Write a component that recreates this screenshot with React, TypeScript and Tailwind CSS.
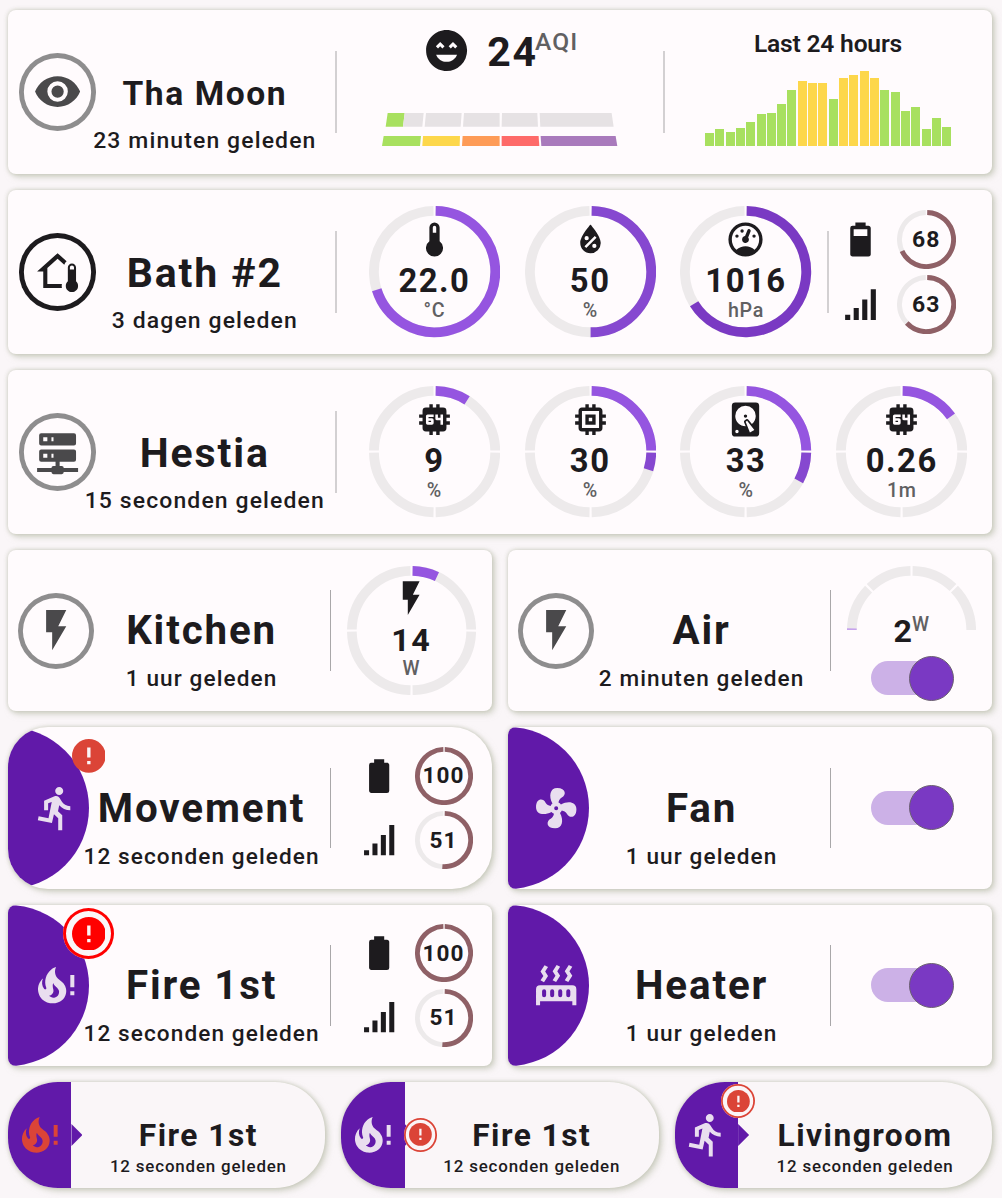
import type { ReactNode } from "react";

const icons = {
  eye: "M12,9A3,3 0 0,0 9,12A3,3 0 0,0 12,15A3,3 0 0,0 15,12A3,3 0 0,0 12,9M12,17A5,5 0 0,1 7,12A5,5 0 0,1 12,7A5,5 0 0,1 17,12A5,5 0 0,1 12,17M12,4.5C7,4.5 2.73,7.61 1,12C2.73,16.39 7,19.5 12,19.5C17,19.5 21.27,16.39 23,12C21.27,7.61 17,4.5 12,4.5Z",
  homeThermometer:
    "M19 8C20.11 8 21 8.9 21 10V16.76C21.61 17.31 22 18.11 22 19C22 20.66 20.66 22 19 22C17.34 22 16 20.66 16 19C16 18.11 16.39 17.31 17 16.76V10C17 8.9 17.9 8 19 8M19 9C18.45 9 18 9.45 18 10V11H20V10C20 9.45 19.55 9 19 9M12 5.69L7 10.19V18H14.1L14 19L14.1 20H5V12H2L12 3L16.4 6.96C15.89 7.4 15.5 7.97 15.25 8.61L12 5.69Z",
  server:
    "M13,19H14A1,1 0 0,1 15,20H22V22H15A1,1 0 0,1 14,23H10A1,1 0 0,1 9,22H2V20H9A1,1 0 0,1 10,19H11V17H4A1,1 0 0,1 3,16V12A1,1 0 0,1 4,11H20A1,1 0 0,1 21,12V16A1,1 0 0,1 20,17H13V19M4,3H20A1,1 0 0,1 21,4V8A1,1 0 0,1 20,9H4A1,1 0 0,1 3,8V4A1,1 0 0,1 4,3M9,7H10V5H9V7M9,15H10V13H9V15M5,5V7H7V5H5M5,13V15H7V13H5Z",
  flash: "M7,2V13H10V22L17,10H13L17,2H7Z",
  thermometer: "M15 13V5A3 3 0 0 0 9 5V13A5 5 0 1 0 15 13M12 4A1 1 0 0 1 13 5V8H11V5A1 1 0 0 1 12 4Z",
  humidity:
    "M12,3.25C12,3.25 6,10 6,14C6,17.32 8.69,20 12,20A6,6 0 0,0 18,14C18,10 12,3.25 12,3.25M14.47,9.97L15.53,11.03L9.53,17.03L8.47,15.97M9.75,10A1.25,1.25 0 0,1 11,11.25A1.25,1.25 0 0,1 9.75,12.5A1.25,1.25 0 0,1 8.5,11.25A1.25,1.25 0 0,1 9.75,10M14.25,14.5A1.25,1.25 0 0,1 15.5,15.75A1.25,1.25 0 0,1 14.25,17A1.25,1.25 0 0,1 13,15.75A1.25,1.25 0 0,1 14.25,14.5Z",
  gauge:
    "M12,2A10,10 0 0,0 2,12A10,10 0 0,0 12,22A10,10 0 0,0 22,12A10,10 0 0,0 12,2M12,4A8,8 0 0,1 20,12C20,14.4 19,16.5 17.3,18C15.9,16.7 14,16 12,16C10,16 8.2,16.7 6.7,18C5,16.5 4,14.4 4,12A8,8 0 0,1 12,4M14,5.89C13.62,5.9 13.26,6.15 13.1,6.54L11.81,9.77L11.71,10C11,10.13 10.41,10.6 10.14,11.26C9.73,12.29 10.23,13.45 11.26,13.86C12.29,14.27 13.45,13.77 13.86,12.74C14.12,12.08 14,11.32 13.57,10.76L13.67,10.5L14.96,7.29L14.97,7.26C15.17,6.75 14.92,6.17 14.41,5.96C14.28,5.91 14.15,5.89 14,5.89M10,6A1,1 0 0,0 9,7A1,1 0 0,0 10,8A1,1 0 0,0 11,7A1,1 0 0,0 10,6M7,9A1,1 0 0,0 6,10A1,1 0 0,0 7,11A1,1 0 0,0 8,10A1,1 0 0,0 7,9M17,9A1,1 0 0,0 16,10A1,1 0 0,0 17,11A1,1 0 0,0 18,10A1,1 0 0,0 17,9Z",
  cpu64:
    "M9,3V5H7A2,2 0 0,0 5,7V9H3V11H5V13H3V15H5V17A2,2 0 0,0 7,19H9V21H11V19H13V21H15V19H17A2,2 0 0,0 19,17V15H21V13H19V11H21V9H19V7A2,2 0 0,0 17,5H15V3H13V5H11V3M8,9H11.5V10.5H8.5V11.25H10.5A1,1 0 0,1 11.5,12.25V14A1,1 0 0,1 10.5,15H8A1,1 0 0,1 7,14V10A1,1 0 0,1 8,9M12.5,9H14V11H15.5V9H17V15H15.5V12.5H13.5A1,1 0 0,1 12.5,11.5V9M8.5,12.75V13.5H10V12.75H8.5Z",
  memory:
    "M17,17H7V7H17M21,11V9H19V7C19,5.89 18.1,5 17,5H15V3H13V5H11V3H9V5H7C5.89,5 5,5.89 5,7V9H3V11H5V13H3V15H5V17A2,2 0 0,0 7,19H9V21H11V19H13V21H15V19H17A2,2 0 0,0 19,17V15H21V13H19V11M13,13H11V11H13M15,9H9V15H15V9Z",
  disk: "M6,2H18A2,2 0 0,1 20,4V20A2,2 0 0,1 18,22H6A2,2 0 0,1 4,20V4A2,2 0 0,1 6,2M12,4A6,6 0 0,0 6,10C6,13.31 8.69,16 12.1,16L11.22,13.77C10.95,13.29 11.11,12.68 11.59,12.4L12.45,11.9C12.93,11.63 13.54,11.79 13.82,12.27L15.74,14.69C17.12,13.59 18,11.9 18,10A6,6 0 0,0 12,4M12,9A1,1 0 0,1 13,10A1,1 0 0,1 12,11A1,1 0 0,1 11,10A1,1 0 0,1 12,9M7,18A1,1 0 0,0 6,19A1,1 0 0,0 7,20A1,1 0 0,0 8,19A1,1 0 0,0 7,18M12.09,13.27L14.58,19.58L17.17,18.08L12.95,12.77L12.09,13.27Z",
  battery:
    "M16.67,4H15V2H9V4H7.33A1.33,1.33 0 0,0 6,5.33V20.67C6,21.4 6.6,22 7.33,22H16.67A1.33,1.33 0 0,0 18,20.67V5.33C18,4.6 17.4,4 16.67,4Z",
  battery70:
    "M16,10H8V6H16M16.67,4H15V2H9V4H7.33A1.33,1.33 0 0,0 6,5.33V20.67C6,21.4 6.6,22 7.33,22H16.67A1.33,1.33 0 0,0 18,20.67V5.33C18,4.6 17.4,4 16.67,4Z",
  signal: "M3,21H6V18H3M8,21H11V14H8M13,21H16V9H13M18,21H21V3H18V21Z",
  excited:
    "M12,2C6.47,2 2,6.47 2,12C2,17.53 6.47,22 12,22A10,10 0 0,0 22,12C22,6.47 17.5,2 12,2M8.88,7.82L11,9.94L9.94,11L8.88,9.94L7.82,11L6.76,9.94L8.88,7.82M12,17.5C9.67,17.5 7.69,16.04 6.89,14H17.11C16.31,16.04 14.33,17.5 12,17.5M16.18,11L15.12,9.94L14.06,11L13,9.94L15.12,7.82L17.24,9.94L16.18,11Z",
  run: "M13.5,5.5C14.59,5.5 15.5,4.58 15.5,3.5C15.5,2.38 14.59,1.5 13.5,1.5C12.39,1.5 11.5,2.38 11.5,3.5C11.5,4.58 12.39,5.5 13.5,5.5M9.89,19.38L10.89,15L13,17V23H15V15.5L12.89,13.5L13.5,10.5C14.79,12 16.79,13 19,13V11C17.09,11 15.5,10 14.69,8.58L13.69,7C13.29,6.38 12.69,6 12,6C11.69,6 11.5,6.08 11.19,6.08L6,8.28V13H8V9.58L9.79,8.88L8.19,17L3.29,16L2.89,18L9.89,19.38Z",
  fan: "M12,11A1,1 0 0,0 11,12A1,1 0 0,0 12,13A1,1 0 0,0 13,12A1,1 0 0,0 12,11M12.5,2C17,2 17.11,5.57 14.75,6.75C13.76,7.24 13.32,8.29 13.13,9.22C13.61,9.42 14.03,9.73 14.35,10.13C18.05,8.13 22.03,8.92 22.03,12.5C22.03,17 18.46,17.1 17.28,14.73C16.78,13.74 15.72,13.3 14.79,13.11C14.59,13.59 14.28,14 13.88,14.34C15.87,18.03 15.08,22 11.5,22C7,22 6.91,18.42 9.27,17.24C10.25,16.75 10.69,15.71 10.89,14.79C10.4,14.59 9.97,14.27 9.65,13.87C5.96,15.85 2,15.07 2,11.5C2,7 5.56,6.89 6.74,9.26C7.24,10.25 8.29,10.68 9.22,10.87C9.41,10.39 9.73,9.97 10.14,9.65C8.15,5.96 8.94,2 12.5,2Z",
  radiator:
    "M7.95,3L6.53,5.19L7.95,7.4H7.94L5.95,10.5L4.22,9.6L5.64,7.39L4.22,5.19L6.22,2.09L7.95,3M13.95,2.89L12.53,5.1L13.95,7.3L13.94,7.31L11.95,10.4L10.22,9.5L11.64,7.3L10.22,5.1L12.22,2L13.95,2.89M20,2.89L18.56,5.1L20,7.3V7.31L18,10.4L16.25,9.5L17.67,7.3L16.25,5.1L18.25,2L20,2.89M2,22V14A2,2 0 0,1 4,12H20A2,2 0 0,1 22,14V22H20V20H4V22H2M6,14A1,1 0 0,0 5,15V17A1,1 0 0,0 6,18A1,1 0 0,0 7,17V15A1,1 0 0,0 6,14M10,14A1,1 0 0,0 9,15V17A1,1 0 0,0 10,18A1,1 0 0,0 11,17V15A1,1 0 0,0 10,14M14,14A1,1 0 0,0 13,15V17A1,1 0 0,0 14,18A1,1 0 0,0 15,17V15A1,1 0 0,0 14,14M18,14A1,1 0 0,0 17,15V17A1,1 0 0,0 18,18A1,1 0 0,0 19,17V15A1,1 0 0,0 18,14Z",
  fireAlert:
    "M15.66 11.2C15.43 10.9 15.15 10.64 14.89 10.38C14.22 9.78 13.46 9.35 12.82 8.72C11.33 7.26 11 4.85 11.95 3C11 3.23 10.17 3.75 9.46 4.32C6.87 6.4 5.85 10.07 7.07 13.22C7.11 13.32 7.15 13.42 7.15 13.55C7.15 13.77 7 13.97 6.8 14.05C6.57 14.15 6.33 14.09 6.14 13.93C6.08 13.88 6.04 13.83 6 13.76C4.87 12.33 4.69 10.28 5.45 8.64C3.78 10 2.87 12.3 3 14.47C3.06 14.97 3.12 15.47 3.29 15.97C3.43 16.57 3.7 17.17 4 17.7C5.08 19.43 6.95 20.67 8.96 20.92C11.1 21.19 13.39 20.8 15.03 19.32C16.86 17.66 17.5 15 16.56 12.72L16.43 12.46C16.22 12 15.66 11.2 15.66 11.2M12.5 17.5C12.22 17.74 11.76 18 11.4 18.1C10.28 18.5 9.16 17.94 8.5 17.28C9.69 17 10.4 16.12 10.61 15.23C10.78 14.43 10.46 13.77 10.33 13C10.21 12.26 10.23 11.63 10.5 10.94C10.69 11.32 10.89 11.7 11.13 12C11.9 13 13.11 13.44 13.37 14.8C13.41 14.94 13.43 15.08 13.43 15.23C13.46 16.05 13.1 16.95 12.5 17.5H12.5M19 7H21V13H19V7M19 15H21V17H19V15Z",
};

type IconName = keyof typeof icons;

function Icon({ name, className }: { name: IconName; className: string }) {
  return (
    <svg viewBox="0 0 24 24" fill="currentColor" className={`shrink-0 ${className}`}>
      <path d={icons[name]} />
    </svg>
  );
}

function arc(c: number, r: number, from: number, to: number) {
  const p = (deg: number) => {
    const a = ((deg - 90) * Math.PI) / 180;
    return `${(c + r * Math.cos(a)).toFixed(3)} ${(c + r * Math.sin(a)).toFixed(3)}`;
  };
  return `M${p(from)}A${r} ${r} 0 ${to - from > 180 ? 1 : 0} 1 ${p(to)}`;
}

/* Every card sets --u, one hundredth of its height; children are sized in it. */
const SHADOW = "shadow-[0_0_4px_rgba(186,190,172,0.8),3px_3px_6px_rgba(186,190,172,0.6)]";

function WideCard({ children }: { children: ReactNode }) {
  return (
    <section
      className={`flex h-[164px] w-[984px] overflow-hidden rounded-lg bg-[#fffbfd] [--gap:16px] [--top:63px] [--u:1.64px] ${SHADOW}`}
    >
      {children}
    </section>
  );
}

function HalfCard({ round, children }: { round?: boolean; children: ReactNode }) {
  return (
    <section
      className={`relative flex h-[161.33px] w-[484px] overflow-hidden bg-[#fffbfd] [--gap:16.8px] [--top:61.3px] [--u:1.6133px] ${
        round ? "rounded-[40px]" : "rounded-lg"
      } ${SHADOW}`}
    >
      {children}
    </section>
  );
}

function CircleIcon({ name, strong }: { name: IconName; strong?: boolean }) {
  return (
    <div className="flex w-[calc(60*var(--u))] shrink-0 items-center justify-center">
      <div
        className={`flex size-[calc(47*var(--u))] shrink-0 items-center justify-center rounded-full ${
          strong
            ? "text-[#1d1b1e] shadow-[inset_0_0_0_4.9px_#1d1b1e]"
            : "text-[#4a494b] shadow-[inset_0_0_0_4.9px_#8e8d8e]"
        }`}
      >
        <Icon name={name} className="size-[calc(30*var(--u))]" />
      </div>
    </div>
  );
}

function PurpleIcon({ name, badge }: { name: IconName; badge?: ReactNode }) {
  return (
    <div className="flex w-[calc(60*var(--u))] shrink-0 items-center justify-center">
      <div className="absolute top-0 left-0 h-full w-[calc(50*var(--u))] rounded-r-full bg-[#6119a9]" />
      {badge}
      <Icon name={name} className="relative size-[calc(30*var(--u))] text-[#e9deef]" />
    </div>
  );
}

function Title({ name, ago, small }: { name: string; ago: string; small?: boolean }) {
  return (
    <div className="relative flex w-[calc(120*var(--u))] shrink-0 flex-col items-center pt-[var(--top)] whitespace-nowrap">
      <div
        className={`h-[calc(25*var(--u))] font-bold tracking-[0.046em] ${
          small
            ? "text-[length:calc(20.5*var(--u))] leading-[calc(25.2*var(--u))]"
            : "text-[length:calc(25*var(--u))] leading-[calc(25*var(--u))]"
        }`}
      >
        {name}
      </div>
      <div className="mt-[var(--gap)] text-[length:calc(14*var(--u))] leading-[calc(14*var(--u))] font-medium tracking-[0.049em]">
        {ago}
      </div>
    </div>
  );
}

function Divider({ thin }: { thin?: boolean }) {
  return (
    <div
      className={`my-auto h-[calc(50*var(--u))] shrink-0 ${thin ? "-ml-px w-px bg-[#a9a7a9]" : "-mx-px w-0.5 bg-[#d3d0d2]"}`}
    />
  );
}

type Segment = { from: number; to: number; color: string };

function Dial({
  icon,
  value,
  unit,
  ticks,
  segments,
}: {
  icon: IconName;
  value: string;
  unit: string;
  ticks: number;
  segments: Segment[];
}) {
  const step = 360 / ticks;
  return (
    <div className="my-auto grid w-[calc(95*var(--u))] shrink-0 justify-items-center">
      <svg viewBox="0 0 80 80" fill="none" strokeWidth="6" className="size-[calc(80*var(--u))] [grid-area:1/1]">
        {Array.from({ length: ticks }, (_, i) => (
          <path key={i} d={arc(40, 37, i * step + 1, (i + 1) * step - 1)} stroke="#edeaeb" />
        ))}
        {segments.map((s) => (
          <path key={s.from} d={arc(40, 37, s.from, s.to)} stroke={s.color} />
        ))}
      </svg>
      <div className="flex flex-col items-center pt-[calc(7.5*var(--u))] whitespace-nowrap [grid-area:1/1]">
        <Icon name={icon} className="size-[calc(25*var(--u))]" />
        <div className="mt-[calc(3.2*var(--u))] text-[length:calc(20*var(--u))] leading-[calc(20*var(--u))] font-bold tracking-[0.046em]">
          {value}
        </div>
        <div className="mt-[calc(1.9*var(--u))] text-[length:calc(12*var(--u))] leading-[calc(12*var(--u))] font-medium tracking-[0.03em] text-[#616062]">
          {unit}
        </div>
      </div>
    </div>
  );
}

function MiniDial({ value }: { value: number }) {
  return (
    <div className="grid size-[calc(36*var(--u))] place-items-center">
      <svg viewBox="0 0 36 36" fill="none" strokeWidth="3" className="size-full [grid-area:1/1]">
        <path d={arc(18, 16.5, 1.5, 358.5)} stroke="#edeaeb" />
        <path d={arc(18, 16.5, 1.5, Math.min(value * 3.6, 358.5))} stroke="#8f6066" />
      </svg>
      <span className="pt-[2px] text-[length:calc(14*var(--u))] leading-none font-bold tracking-[0.05em] [grid-area:1/1]">
        {value}
      </span>
    </div>
  );
}

function Levels({ battery, level, signal }: { battery: IconName; level: number; signal: number }) {
  return (
    <div className="flex shrink-0">
      <div className="flex w-[calc(40*var(--u))] flex-col items-center justify-center gap-[calc(15*var(--u))]">
        <Icon name={battery} className="size-[calc(25*var(--u))]" />
        <Icon name="signal" className="size-[calc(25*var(--u))]" />
      </div>
      <div className="flex w-[calc(40*var(--u))] flex-col items-center justify-center gap-[calc(4*var(--u))]">
        <MiniDial value={level} />
        <MiniDial value={signal} />
      </div>
    </div>
  );
}

function Toggle() {
  return (
    <div className="flex h-[calc(28*var(--u))] w-[calc(50*var(--u))] items-center">
      <div className="flex h-[34px] w-full items-center justify-end rounded-full bg-[#ccb1e7]">
        <div className="-mr-[2.4px] size-[45px] shrink-0 rounded-full border-[1.5px] border-[#6b6070] bg-[#7a39c3]" />
      </div>
    </div>
  );
}

const BAR_TOPS = [400, 388, 396, 384, 366, 342, 339, 312, 270, 243, 250, 250, 297, 234, 225, 213, 234, 270, 276, 333, 321, 388, 354, 380];

function History() {
  return (
    <div className="flex w-[calc(200*var(--u))] flex-col items-center pt-[21px]">
      <div className="h-[26px] text-[length:calc(15*var(--u))] leading-[25px] font-semibold tracking-[-0.008em]">Last 24 hours</div>
      <div className="mt-[14px] flex h-[75px] w-[246px] items-end gap-[1.35px]">
        {BAR_TOPS.map((top, i) => (
          <div
            key={i}
            className={`flex-1 ${top < 260 ? "bg-[#fdd74b]" : "bg-[#a8e05f]"}`}
            style={{ height: (438 - top) / 3 }}
          />
        ))}
      </div>
    </div>
  );
}

function AirQuality() {
  const green = "#a8e05f";
  const grey = "#e6e2e4";
  return (
    <div className="flex w-[calc(200*var(--u))] flex-col items-center pt-[16.4px]">
      <div className="flex h-[49.2px] w-[158px] items-start pl-[1px]">
        <Icon name="excited" className="size-[calc(30*var(--u))]" />
        <div className="ml-[16px] flex">
          <span className="text-[length:calc(25*var(--u))] leading-[52px] font-bold tracking-[0.046em]">24</span>
          <span className="-ml-[3px] pt-[3px] text-[length:calc(15*var(--u))] leading-[26px] font-medium tracking-[0.046em] text-[#616062]">
            AQI
          </span>
        </div>
      </div>
      <svg viewBox="127 339 706 99" className="mt-[37.3px] h-[33px] w-[235.3px]">
        <polygon points="144,339 195,339 190,380 138,380" fill={green} />
        <polygon points="195,339 252,339 248,380 190,380" fill={grey} />
        <polygon points="259,339 366,339 363,380 255,380" fill={grey} />
        <polygon points="373,339 480,339 480,380 370,380" fill={grey} />
        <polygon points="487,339 593,339 595,380 486,380" fill={grey} />
        <polygon points="600,339 816,339 822,380 602,380" fill={grey} />
        <polygon points="132,408 244,408 241,438 127,438" fill={green} />
        <polygon points="250,408 361,408 360,438 248,438" fill="#fdd74b" />
        <polygon points="369,408 480,408 480,438 367,438" fill="#fe9b57" />
        <polygon points="486,408 597,408 599,438 486,438" fill="#fe6a69" />
        <polygon points="603,408 828,408 833,438 605,438" fill="#a97abc" />
      </svg>
    </div>
  );
}

function HalfGauge() {
  return (
    <svg viewBox="0 0 80 40" fill="none" strokeWidth="6" className="h-[calc(40*var(--u))] w-[calc(80*var(--u))]">
      {[-89.5, -44, 1, 46].map((a, i) => (
        <path key={a} d={arc(40, 37, a, [-46, -1, 44, 89.5][i])} stroke="#edeaeb" />
      ))}
      <path d={arc(40, 37, -89.5, -88)} stroke="#c6a3ec" />
    </svg>
  );
}

function Exclamation({ className }: { className: string }) {
  return (
    <svg viewBox="0 0 20 20" className={className}>
      <circle cx="10" cy="10" r="10" fill="currentColor" />
      <path d="M9 5h2v6H9zM9 13h2v2H9z" fill="#fbf4f6" />
    </svg>
  );
}

function PillCard({
  icon,
  red,
  name,
  badge,
}: {
  icon: IconName;
  red?: boolean;
  name: string;
  badge?: ReactNode;
}) {
  return (
    <section className={`relative flex h-[105.8px] w-[317.33px] overflow-hidden rounded-[50px] bg-[#faf6f8] [--u:1.0578px] ${SHADOW}`}>
      <div className="relative flex w-[calc(60*var(--u))] shrink-0 items-center justify-center bg-[#6119a9]">
        <Icon name={icon} className={`size-[calc(45*var(--u))] ${red ? "text-[#db4437]" : "text-[#e9deef]"}`} />
        <div className="absolute top-1/2 left-full h-[22px] w-[11px] -translate-y-1/2 bg-[#6119a9] [clip-path:polygon(0_0,100%_50%,0_100%)]" />
      </div>
      {badge}
      <div className="flex flex-1 flex-col items-center pt-[calc(36.2*var(--u))] whitespace-nowrap">
        <div className="text-[length:calc(30*var(--u))] leading-[calc(30*var(--u))] font-bold tracking-[0.046em]">{name}</div>
        <div className="mt-[calc(5.9*var(--u))] text-[length:calc(16*var(--u))] leading-[calc(16*var(--u))] font-medium tracking-[0.049em]">
          12 seconden geleden
        </div>
      </div>
    </section>
  );
}

const RING =
  "absolute z-10 flex size-[33.6px] items-center justify-center rounded-full bg-[#fbf4f6] shadow-[inset_0_0_0_1.8px_#db4437]";

const V1 = "#9555e0";
const V2 = "#8648d0";
const V3 = "#7a39c3";

export default function App() {
  return (
    <main className="h-[1198px] w-[1002px] overflow-hidden bg-[#faf6f8] px-2 pt-2.5 font-[Roboto,sans-serif] text-[#1d1b1e]">
      <div className="flex flex-col gap-4">
        <WideCard>
          <CircleIcon name="eye" />
          <Title name="Tha Moon" ago="23 minuten geleden" small />
          <div className="w-[calc(20*var(--u))] shrink-0" />
          <Divider />
          <AirQuality />
          <Divider />
          <History />
        </WideCard>

        <WideCard>
          <CircleIcon name="homeThermometer" strong />
          <Title name="Bath #2" ago="3 dagen geleden" />
          <div className="w-[calc(20*var(--u))] shrink-0" />
          <Divider />
          <div className="flex w-[calc(300*var(--u))] shrink-0 pl-[calc(12.5*var(--u))]">
            <Dial icon="thermometer" value="22.0" unit="°C" ticks={1} segments={[{ from: 1, to: 252.5, color: V1 }]} />
            <Dial icon="humidity" value="50" unit="%" ticks={1} segments={[{ from: 1, to: 180, color: V2 }]} />
            <Dial icon="gauge" value="1016" unit="hPa" ticks={1} segments={[{ from: 1, to: 238, color: V3 }]} />
          </div>
          <Divider />
          <Levels battery="battery70" level={68} signal={63} />
        </WideCard>

        <WideCard>
          <CircleIcon name="server" />
          <Title name="Hestia" ago="15 seconden geleden" />
          <div className="w-[calc(20*var(--u))] shrink-0" />
          <Divider />
          <div className="flex pl-[calc(12.5*var(--u))]">
            <Dial icon="cpu64" value="9" unit="%" ticks={4} segments={[{ from: 1, to: 32.4, color: V1 }]} />
            <Dial
              icon="memory"
              value="30"
              unit="%"
              ticks={4}
              segments={[
                { from: 1, to: 89, color: V1 },
                { from: 91, to: 107.5, color: V2 },
              ]}
            />
            <Dial
              icon="disk"
              value="33"
              unit="%"
              ticks={4}
              segments={[
                { from: 1, to: 89, color: V1 },
                { from: 91, to: 118.8, color: V2 },
              ]}
            />
            <Dial icon="cpu64" value="0.26" unit="1m" ticks={4} segments={[{ from: 1, to: 54.5, color: V1 }]} />
          </div>
        </WideCard>

        <div className="grid w-[984px] grid-cols-2 gap-4">
          <HalfCard>
            <CircleIcon name="flash" />
            <Title name="Kitchen" ago="1 uur geleden" />
            <div className="w-[calc(20*var(--u))] shrink-0" />
            <Divider thin />
            <div className="flex pl-[calc(2.5*var(--u))]">
              <Dial icon="flash" value="14" unit="W" ticks={4} segments={[{ from: 1, to: 25.2, color: V1 }]} />
            </div>
          </HalfCard>
          <HalfCard>
            <CircleIcon name="flash" />
            <Title name="Air" ago="2 minuten geleden" />
            <div className="w-[calc(20*var(--u))] shrink-0" />
            <Divider thin />
            <div className="flex w-[calc(100*var(--u))] flex-col items-center pt-[calc(10*var(--u))]">
              <HalfGauge />
              <div className="-mt-[16px] flex h-[29px]">
                <span className="text-[length:calc(20*var(--u))] leading-[33px] font-bold">2</span>
                <span className="text-[length:calc(12*var(--u))] leading-[20px] font-medium text-[#616062]">W</span>
              </div>
              <div className="mt-[12px]">
                <Toggle />
              </div>
            </div>
          </HalfCard>

          <HalfCard round>
            <PurpleIcon
              name="run"
              badge={<Exclamation className="absolute top-[12px] left-[63.8px] size-[33.7px] text-[#db4437]" />}
            />
            <Title name="Movement" ago="12 seconden geleden" />
            <div className="w-[calc(20*var(--u))] shrink-0" />
            <Divider thin />
            <div className="flex pl-[calc(10*var(--u))]">
              <Levels battery="battery" level={100} signal={51} />
            </div>
          </HalfCard>
          <HalfCard>
            <PurpleIcon name="fan" />
            <Title name="Fan" ago="1 uur geleden" />
            <div className="w-[calc(20*var(--u))] shrink-0" />
            <Divider thin />
            <div className="flex w-[calc(100*var(--u))] items-center justify-center">
              <Toggle />
            </div>
          </HalfCard>

          <HalfCard>
            <PurpleIcon
              name="fireAlert"
              badge={
                <div className="absolute top-[3.2px] left-[54.8px] flex size-[51.6px] items-center justify-center rounded-full bg-[#fbf6f8] shadow-[inset_0_0_0_3px_#ff0000]">
                  <Exclamation className="size-[33.7px] text-[#ff0000]" />
                </div>
              }
            />
            <Title name="Fire 1st" ago="12 seconden geleden" />
            <div className="w-[calc(20*var(--u))] shrink-0" />
            <Divider thin />
            <div className="flex pl-[calc(10*var(--u))]">
              <Levels battery="battery" level={100} signal={51} />
            </div>
          </HalfCard>
          <HalfCard>
            <PurpleIcon name="radiator" />
            <Title name="Heater" ago="1 uur geleden" />
            <div className="w-[calc(20*var(--u))] shrink-0" />
            <Divider thin />
            <div className="flex w-[calc(100*var(--u))] items-center justify-center">
              <Toggle />
            </div>
          </HalfCard>
        </div>

        <div className="flex gap-4">
          <PillCard icon="fireAlert" red name="Fire 1st" />
          <PillCard
            icon="fireAlert"
            name="Fire 1st"
            badge={
              <div className={`${RING} top-[36.1px] left-[62.5px]`}>
                <Exclamation className="size-[22.8px] text-[#db4437]" />
              </div>
            }
          />
          <PillCard
            icon="run"
            name="Livingroom"
            badge={
              <div className={`${RING} top-[2.3px] left-[46.8px]`}>
                <Exclamation className="size-[22.8px] text-[#db4437]" />
              </div>
            }
          />
        </div>
      </div>
    </main>
  );
}
